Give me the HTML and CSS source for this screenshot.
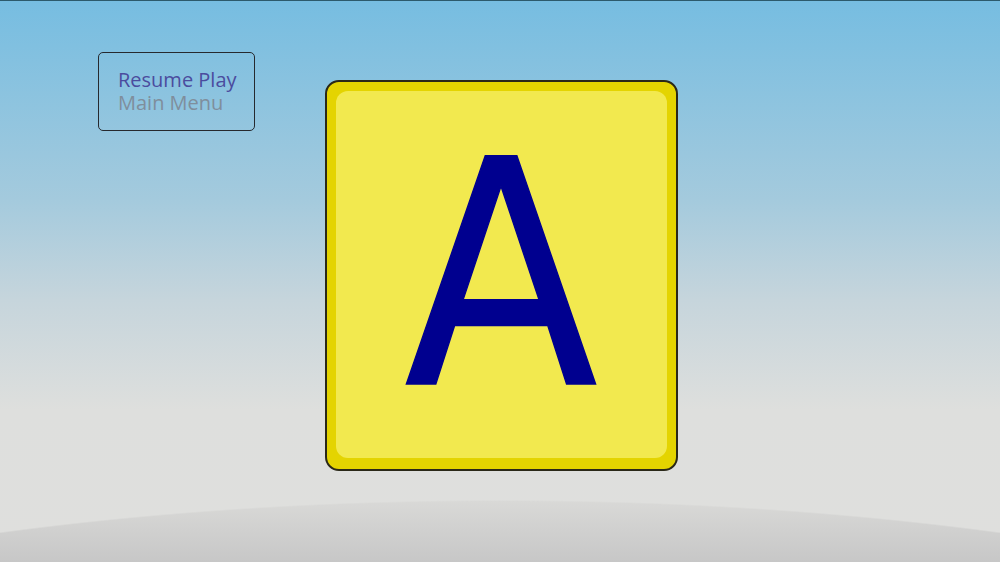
FILE: index.html
```html
<!DOCTYPE html>
<html lang="en">
<head>
    <meta charset="UTF-8" />
    <meta name="viewport" content="width=device-width, initial-scale=1.0" />
    <title>Letters</title>
    <link rel="stylesheet" href="styles.css">
</head>
<body>
    <div class="stage">
        <div class="menu">
            <div class="menu-item active">Resume Play</div>
            <div class="menu-item">Main Menu</div>
        </div>

        <div class="card">
            <div class="card-face">
                <span class="letter">A</span>
            </div>
        </div>
    </div>
    <div class="ground"></div>
</body>
</html>
```

FILE: styles.css
```css
html, body {
    height: 100%;
}

body {
    margin: 0;
    overflow: hidden;
    position: relative;
    font-family: "Open Sans", "DejaVu Sans", sans-serif;
    border-top: 1px solid #2c5a6c;
    box-sizing: border-box;
    background: linear-gradient(to bottom, #76bde1 0px, #a4cadd 200px, #c6d5dc 300px, #dedfdd 410px, #dfdfdd 100%);
}

.stage {
    display: flex;
    align-items: flex-start;
    padding: 51px 0 0 98px;
    position: relative;
    z-index: 1;
}

.menu {
    width: 157px;
    height: 79px;
    box-sizing: border-box;
    border: 1.5px solid #26292e;
    border-radius: 5px;
    padding: 15px 0 0 19px;
    font-size: 20px;
    line-height: 23px;
}

.menu-item {
    color: #7f8e9c;
    height: 23px;
}

.menu-item.active {
    color: #4b4c9e;
}

.card {
    margin: 28px 0 0 70px;
    width: 353px;
    height: 391px;
    box-sizing: border-box;
    border: 2px solid #2a2818;
    border-radius: 14px;
    background: #e4d400;
    padding: 9px 9px 11px 9px;
}

.card-face {
    height: 100%;
    border-radius: 12px;
    background: #f2e94f;
    display: flex;
    align-items: center;
    justify-content: center;
}

.letter {
    font-family: "DejaVu Sans", sans-serif;
    font-size: 313px;
    line-height: 1;
    color: #00008f;
    -webkit-text-stroke: 1.5px #00008f;
    margin-top: 2px;
    transform: scaleX(0.905);
}

.ground {
    position: absolute;
    left: 0;
    right: 0;
    bottom: 0;
    height: 62px;
    background: linear-gradient(to bottom, #d9d9d7, #c7c7c7);
    -webkit-mask-image: radial-gradient(ellipse 1200px 352px at 50% 352px, #000 99.6%, transparent 100%);
    mask-image: radial-gradient(ellipse 1200px 352px at 50% 352px, #000 99.6%, transparent 100%);
}
```
